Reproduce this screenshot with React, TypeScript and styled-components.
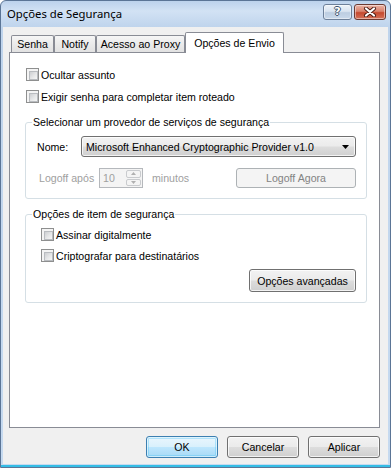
import React from "react";
import styled, { createGlobalStyle, css } from "styled-components";

const GlobalStyle = createGlobalStyle`
	html, body {
		margin: 0;
		padding: 0;
	}
	body {
		width: 391px;
		height: 468px;
		overflow: hidden;
		font-family: "Liberation Sans", Arial, sans-serif;
		font-size: 10.6px;
		color: #000;
	}
	* {
		box-sizing: border-box;
	}
`;

const Window = styled.div`
	width: 391px;
	height: 468px;
	display: flex;
	flex-direction: column;
	border: 1px solid #5b7596;
	border-radius: 6px 6px 0 0;
	background: linear-gradient(180deg, #bcd2ec 0px, #d2e2f4 10px, #bfd4ec 26px, #c6daf0 100%);
	box-shadow: inset 0 -2px 0 #34bde6;
`;

const TitleBar = styled.div`
	flex: none;
	height: 26px;
	display: flex;
	align-items: flex-start;
	padding: 0 4px 0 6px;
`;

const Title = styled.div`
	flex: 1;
	font-family: "Noto Sans", "Open Sans", sans-serif;
	font-size: 11.3px;
	line-height: 26px;
	color: #000;
`;

const CaptionButton = styled.div<{ $variant: "help" | "close" }>`
	margin-top: 3px;
	height: 16px;
	display: flex;
	align-items: center;
	justify-content: center;
	border-radius: 3px;
	${(p) =>
		p.$variant === "help"
			? css`
					width: 29px;
					margin-right: 2px;
					border: 1px solid #6d8099;
					background: linear-gradient(180deg, #eef3f9 0%, #d9e4f0 45%, #bccde1 55%, #c9d9ea 100%);
			  `
			: css`
					width: 32px;
					border: 1px solid #6b3a32;
					background: linear-gradient(180deg, #eab4a6 0%, #d9826d 45%, #c5492f 55%, #d4725a 100%);
			  `}
	box-shadow: inset 0 0 0 1px rgba(255, 255, 255, 0.45);
`;

const HelpGlyph = styled.span`
	font-family: "DejaVu Sans", sans-serif;
	font-weight: bold;
	font-size: 11px;
	line-height: 12px;
	color: #fff;
	text-shadow: 1px 0 0 #40536b, -1px 0 0 #40536b, 0 1px 0 #40536b, 0 -1px 0 #40536b;
`;

const Client = styled.div`
	flex: 1;
	margin: 0 2px 3px 2px;
	background: #f0f0f0;
	display: flex;
	flex-direction: column;
	padding: 5px 8px 6px 6px;
`;

const TabStrip = styled.div`
	flex: none;
	height: 20px;
	display: flex;
	align-items: flex-end;
	padding-left: 2px;
`;

const Tab = styled.div<{ $width: number; $active?: boolean }>`
	width: ${(p) => p.$width}px;
	display: flex;
	align-items: center;
	justify-content: center;
	white-space: nowrap;
	border: 1px solid #898c95;
	border-bottom: none;
	border-radius: 2px 2px 0 0;
	${(p) =>
		p.$active
			? css`
					height: 21px;
					margin-bottom: -1px;
					background: #fff;
					position: relative;
					z-index: 1;
			  `
			: css`
					height: 17px;
					background: linear-gradient(180deg, #f6f6f6 0%, #ebebeb 50%, #e2e2e2 100%);
			  `}
`;

const Panel = styled.div`
	flex: 1;
	border: 1px solid #898c95;
	background: #fff;
	padding: 15px 12px 0 15px;
	display: flex;
	flex-direction: column;
`;

const CheckRow = styled.label<{ $after?: number }>`
	display: flex;
	align-items: center;
	height: 13px;
	margin-left: 1px;
	margin-bottom: ${(p) => p.$after ?? 0}px;
`;

const CheckBox = styled.span`
	flex: none;
	width: 13px;
	height: 13px;
	border: 1px solid #8e8f8f;
	background: #f4f4f4;
	padding: 2px;
	&::after {
		content: "";
		display: block;
		width: 100%;
		height: 100%;
		border: 1px solid #b9bcc0;
		background: linear-gradient(135deg, #cdcfd2 0%, #e6e7e8 55%, #f6f6f6 100%);
	}
`;

const CheckText = styled.span`
	margin-left: 2px;
	white-space: nowrap;
`;

const GroupBox = styled.fieldset<{ $top: number }>`
	margin: ${(p) => p.$top}px 0 0 0;
	padding: 0;
	min-width: 0;
	border: 1px solid #d5dfe5;
	border-radius: 3px;
`;

const Legend = styled.legend`
	margin-left: 6px;
	padding: 0 1px;
	line-height: 13px;
	color: #000;
`;

const GroupBody = styled.div<{ $left: number; $bottom: number }>`
	display: flex;
	flex-direction: column;
	padding: 7px 10px ${(p) => p.$bottom}px ${(p) => p.$left}px;
`;

const FieldRow = styled.div<{ $top?: number; $height: number }>`
	display: flex;
	align-items: center;
	height: ${(p) => p.$height}px;
	margin-top: ${(p) => p.$top ?? 0}px;
`;

const FieldLabel = styled.span<{ $width?: number; $indent?: number; $disabled?: boolean }>`
	flex: none;
	white-space: nowrap;
	${(p) => p.$width && `width: ${p.$width}px;`}
	margin-left: ${(p) => p.$indent ?? 0}px;
	color: ${(p) => (p.$disabled ? "#a0a0a0" : "#000")};
`;

const buttonFace = css`
	border: 1px solid #707070;
	border-radius: 3px;
	background: linear-gradient(180deg, #f2f2f2 0%, #ebebeb 49%, #dddddd 51%, #cfcfcf 100%);
	box-shadow: inset 0 0 0 1px rgba(255, 255, 255, 0.75);
`;

const ComboBox = styled.div`
	${buttonFace}
	flex: 1;
	height: 21px;
	display: flex;
	align-items: center;
	padding: 0 6px 0 4px;
	white-space: nowrap;
`;

const ComboText = styled.span`
	flex: 1;
`;

const SpinBox = styled.div`
	flex: none;
	width: 44px;
	height: 20px;
	display: flex;
	border: 1px solid #b5b8bc;
	background: #f4f4f4;
	padding: 1px;
`;

const SpinValue = styled.span`
	flex: 1;
	padding-left: 2px;
	line-height: 16px;
	color: #a0a0a0;
`;

const SpinButtons = styled.div`
	flex: none;
	width: 15px;
	display: flex;
	flex-direction: column;
	gap: 1px;
`;

const SpinHalf = styled.div`
	flex: 1;
	display: flex;
	align-items: center;
	justify-content: center;
	border: 1px solid #c9cbce;
	border-radius: 2px;
	background: #f4f4f4;
`;

const PushButton = styled.button<{ $width: number; $height?: number; $disabled?: boolean; $default?: boolean }>`
	${buttonFace}
	flex: none;
	width: ${(p) => p.$width}px;
	height: ${(p) => p.$height ?? 22}px;
	padding: 0;
	font: inherit;
	color: #000;
	${(p) =>
		p.$disabled &&
		css`
			border-color: #adb2b5;
			background: #f4f4f4;
			box-shadow: none;
			color: #838383;
		`}
	${(p) =>
		p.$default &&
		css`
			border-color: #3c7fb1;
			background: linear-gradient(180deg, #eaf6fd 0%, #d9f0fc 49%, #bee6fd 51%, #a7d9f5 100%);
			box-shadow: inset 0 0 0 1px rgba(255, 255, 255, 0.6), inset 0 0 0 2px rgba(72, 196, 245, 0.35);
		`}
`;

const ButtonRow = styled.div`
	flex: none;
	margin-top: 8px;
	display: flex;
	justify-content: flex-end;
	gap: 9px;
`;

const CloseIcon = () => (
	<svg width="14" height="10" viewBox="0 0 14 10">
		<path d="M3 1.5 L11 8.5 M11 1.5 L3 8.5" stroke="#4a1a12" strokeWidth="4" strokeLinecap="round" />
		<path d="M3 1.5 L11 8.5 M11 1.5 L3 8.5" stroke="#fff" strokeWidth="2.2" strokeLinecap="round" />
	</svg>
);

const DropArrow = () => (
	<svg width="7" height="4" viewBox="0 0 7 4">
		<path d="M0 0 H7 L3.5 4 Z" fill="#000" />
	</svg>
);

const SpinArrow = ({ up }: { up?: boolean }) => (
	<svg width="5" height="3" viewBox="0 0 5 3">
		<path d={up ? "M0 3 H5 L2.5 0 Z" : "M0 0 H5 L2.5 3 Z"} fill="#b0b0b0" />
	</svg>
);

export default function App() {
	return (
		<>
			<GlobalStyle />
			<Window>
				<TitleBar>
					<Title>Opções de Segurança</Title>
					<CaptionButton $variant="help">
						<HelpGlyph>?</HelpGlyph>
					</CaptionButton>
					<CaptionButton $variant="close">
						<CloseIcon />
					</CaptionButton>
				</TitleBar>
				<Client>
					<TabStrip>
						<Tab $width={43}>Senha</Tab>
						<Tab $width={42}>Notify</Tab>
						<Tab $width={89}>Acesso ao Proxy</Tab>
						<Tab $width={99} $active>
							Opções de Envio
						</Tab>
					</TabStrip>
					<Panel>
						<CheckRow $after={9}>
							<CheckBox />
							<CheckText>Ocultar assunto</CheckText>
						</CheckRow>
						<CheckRow>
							<CheckBox />
							<CheckText>Exigir senha para completar item roteado</CheckText>
						</CheckRow>
						<GroupBox $top={13}>
							<Legend>Selecionar um provedor de serviços de segurança</Legend>
							<GroupBody $left={11} $bottom={10}>
								<FieldRow $height={21}>
									<FieldLabel $width={44}>Nome:</FieldLabel>
									<ComboBox>
										<ComboText>Microsoft Enhanced Cryptographic Provider v1.0</ComboText>
										<DropArrow />
									</ComboBox>
								</FieldRow>
								<FieldRow $top={11} $height={20}>
									<FieldLabel $width={60} $indent={2} $disabled>
										Logoff após
									</FieldLabel>
									<SpinBox>
										<SpinValue>10</SpinValue>
										<SpinButtons>
											<SpinHalf>
												<SpinArrow up />
											</SpinHalf>
											<SpinHalf>
												<SpinArrow />
											</SpinHalf>
										</SpinButtons>
									</SpinBox>
									<FieldLabel $indent={9} $disabled>
										minutos
									</FieldLabel>
									<PushButton $width={120} $height={20} $disabled style={{ marginLeft: "auto" }}>
										Logoff Agora
									</PushButton>
								</FieldRow>
							</GroupBody>
						</GroupBox>
						<GroupBox $top={9}>
							<Legend>Opções de item de segurança</Legend>
							<GroupBody $left={14} $bottom={10}>
								<CheckRow $after={8}>
									<CheckBox />
									<CheckText>Assinar digitalmente</CheckText>
								</CheckRow>
								<CheckRow>
									<CheckBox />
									<CheckText>Criptografar para destinatários</CheckText>
								</CheckRow>
								<PushButton $width={107} $height={23} style={{ alignSelf: "flex-end", marginTop: 7 }}>
									Opções avançadas
								</PushButton>
							</GroupBody>
						</GroupBox>
					</Panel>
					<ButtonRow>
						<PushButton $width={72} $default>
							OK
						</PushButton>
						<PushButton $width={72}>Cancelar</PushButton>
						<PushButton $width={72}>Aplicar</PushButton>
					</ButtonRow>
				</Client>
			</Window>
		</>
	);
}
